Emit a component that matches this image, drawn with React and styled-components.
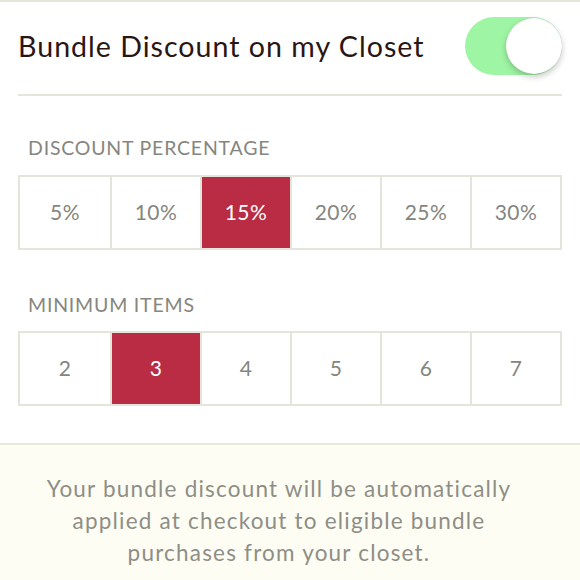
import React from "react";
import styled, { createGlobalStyle } from "styled-components";

const Global = createGlobalStyle`
  html, body { margin: 0; padding: 0; background: #ffffff; }
  body { font-family: Lato, "Open Sans", sans-serif; }
`;

const Page = styled.div`
  width: 580px;
  height: 580px;
  overflow: hidden;
  background: #ffffff;
  border-top: 2px solid #e3e7d8;
  box-sizing: border-box;
  display: flex;
  flex-direction: column;
`;

const Header = styled.div`
  margin: 0 18px;
  height: 94px;
  padding-bottom: 5px;
  border-bottom: 2px solid #e3e5d9;
  display: flex;
  align-items: center;
  justify-content: space-between;
  box-sizing: border-box;
`;

const Title = styled.h1`
  margin: 0;
  font-size: 28.6px;
  font-weight: 400;
  color: #2b1512;
  letter-spacing: 1px;
`;

const Toggle = styled.div`
  position: relative;
  width: 97px;
  height: 58px;
  border-radius: 29px;
  background: #9ef6a4;
`;

const Knob = styled.div`
  position: absolute;
  right: 0;
  top: 1px;
  width: 56px;
  height: 56px;
  border-radius: 50%;
  background: #ffffff;
  box-shadow: 0 3px 6px rgba(0, 0, 0, 0.22), 0 0 1px rgba(0, 0, 0, 0.15);
`;

const Section = styled.section`
  padding: 0 18px;
  display: flex;
  flex-direction: column;
`;

const Label = styled.div`
  font-size: 19.5px;
  color: #86867e;
  text-transform: uppercase;
  padding-left: 10px;
  margin-top: ${(p) => p.$top}px;
  height: 24px;
  line-height: 24px;
  letter-spacing: 0.8px;
`;

const Options = styled.div`
  margin-top: ${(p) => p.$gap}px;
  display: grid;
  grid-template-columns: repeat(6, 1fr);
  border: 2px solid #e4e5da;
  height: 75px;
  box-sizing: border-box;
`;

const Option = styled.div`
  display: flex;
  align-items: center;
  justify-content: center;
  font-size: 21px;
  letter-spacing: 0.5px;
  padding-bottom: 2px;
  color: ${(p) => (p.$active ? "#ffffff" : "#85857d")};
  background: ${(p) => (p.$active ? "#b92c43" : "transparent")};
  border-left: ${(p) => (p.$first ? "none" : "2px solid #e4e5da")};
`;

const Footer = styled.div`
  margin-top: auto;
  height: 137px;
  border-top: 2px solid #e7e8dc;
  background: #fdfdf4;
  box-sizing: border-box;
  display: flex;
  justify-content: center;
  padding: 28px 22px 0 0;
`;

const Note = styled.p`
  margin: 0;
  width: 490px;
  text-align: center;
  font-size: 22.5px;
  line-height: 32px;
  letter-spacing: 1.2px;
  color: #8e8e86;
`;

const percents = ["5%", "10%", "15%", "20%", "25%", "30%"];
const items = ["2", "3", "4", "5", "6", "7"];

export default function App() {
  return (
    <>
      <Global />
      <Page>
        <Header>
          <Title>Bundle Discount on my Closet</Title>
          <Toggle>
            <Knob />
          </Toggle>
        </Header>
        <Section>
          <Label $top={40}>Discount Percentage</Label>
          <Options $gap={15}>
            {percents.map((v, i) => (
              <Option key={v} $first={i === 0} $active={v === "15%"}>
                {v}
              </Option>
            ))}
          </Options>
          <Label $top={43}>Minimum Items</Label>
          <Options $gap={14}>
            {items.map((v, i) => (
              <Option key={v} $first={i === 0} $active={v === "3"}>
                {v}
              </Option>
            ))}
          </Options>
        </Section>
        <Footer>
          <Note>
            Your bundle discount will be automatically applied at checkout to
            eligible bundle purchases from your closet.
          </Note>
        </Footer>
      </Page>
    </>
  );
}
